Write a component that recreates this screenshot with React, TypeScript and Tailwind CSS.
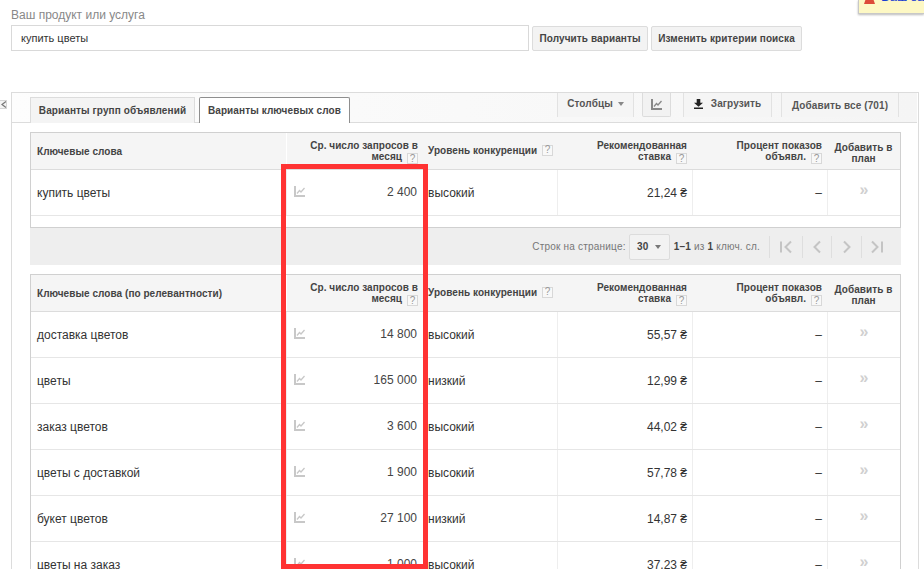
import React from 'react';

const gridCols = 'grid grid-cols-[255px_139px_132px_135px_135px_73px]';

const topRows = [{ kw: 'купить цветы', vol: '2 400', comp: 'высокий', bid: '21,24 ₴' }];

const rows = [
  { kw: 'доставка цветов', vol: '14 800', comp: 'высокий', bid: '55,57 ₴' },
  { kw: 'цветы', vol: '165 000', comp: 'низкий', bid: '12,99 ₴' },
  { kw: 'заказ цветов', vol: '3 600', comp: 'высокий', bid: '44,02 ₴' },
  { kw: 'цветы с доставкой', vol: '1 900', comp: 'высокий', bid: '57,78 ₴' },
  { kw: 'букет цветов', vol: '27 100', comp: 'низкий', bid: '14,87 ₴' },
  { kw: 'цветы на заказ', vol: '1 000', comp: 'высокий', bid: '37,23 ₴' },
];

const ChartIcon = ({ className = 'text-[#c8c8c8]' }: { className?: string }) => (
  <svg width="11" height="11" viewBox="0 0 11 11" className={className} fill="none" stroke="currentColor">
    <path d="M1 0v10H11" strokeWidth="2" />
    <path d="M3 7.5L5.5 4.5l1.5 1.5L10.5 2" strokeWidth="1.3" />
  </svg>
);

const Hint = () => (
  <span className="inline-flex w-[11px] h-[11px] -my-[2px] ml-[5px] items-center justify-center border border-[#d8d8d8] bg-[#f8f8f8] text-[10px] leading-none font-normal text-[#999] align-[-2px]">
    ?
  </span>
);

const TableHeader = ({ title }: { title: string }) => (
  <div className={`${gridCols} h-[37px] bg-[#f5f5f5] border-b border-[#dcdcdc] text-[10px] leading-[11px] font-bold text-[#444] tracking-[0.05px]`}>
    <div className="flex items-center pl-[6px]">{title}</div>
    <div className="border-l border-[#fff] flex flex-col justify-center items-end text-right pr-[7px]">
      <span>Ср. число запросов в</span>
      <span>месяц<Hint /></span>
    </div>
    <div className="flex items-center pl-[3px] pb-[2px] whitespace-nowrap">
      Уровень конкуренции<Hint />
    </div>
    <div className="flex flex-col justify-center items-end pr-[5px]">
      <span>Рекомендованная</span>
      <span>ставка<Hint /></span>
    </div>
    <div className="flex flex-col justify-center items-end pr-[5px]">
      <span>Процент показов</span>
      <span>объявл.<Hint /></span>
    </div>
    <div className="flex flex-col justify-center items-center text-center pt-[3px]">
      <span>Добавить в</span>
      <span>план</span>
    </div>
  </div>
);

const KeywordRow = ({ kw, vol, comp, bid }: { kw: string; vol: string; comp: string; bid: string }) => (
  <div className={`${gridCols} h-[46px] border-b border-[#e6e6e6] text-[12px] text-[#333]`}>
    <div className="flex items-center pl-[6px]">{kw}</div>
    <div className="border-l border-[#eee] flex items-center justify-between pl-[7px] pr-[8px] pb-[2px] text-[#444]">
      <ChartIcon />
      <span>{vol}</span>
    </div>
    <div className="flex items-center pl-[3px]">{comp}</div>
    <div className="border-l border-[#eee] flex items-center justify-end pr-[5px]">{bid}</div>
    <div className="border-l border-[#eee] flex items-center justify-end pr-[5px]">–</div>
    <div className="border-l border-[#eee] flex items-center justify-center pb-[5px] text-[16px] font-bold text-[#d0d0d0]">»</div>
  </div>
);

const PagerIcon = ({ d, width }: { d: string; width: string }) => (
  <div className={`${width} h-[22px] flex items-center justify-center border-l border-[#dedede]`}>
    <svg width="14" height="14" viewBox="0 0 14 14" fill="none" stroke="#c4c4c4" strokeWidth="2">
      <path d={d} />
    </svg>
  </div>
);

export default function App() {
  return (
    <div className="relative w-[924px] h-[569px] overflow-hidden bg-white font-['Liberation_Sans',Arial,sans-serif]">
      {/* Notification corner, scrolled mostly out of view */}
      <div className="absolute right-0 top-0 w-[66px] h-[14px] bg-[#fdf8c4] border-l border-b border-[#c8c8c8] shadow-[0_1px_2px_#bbb] flex items-start gap-[6px] pl-[5px] overflow-hidden">
        <svg width="11" height="10" viewBox="0 0 11 10" className="-mt-[6px] shrink-0">
          <path d="M3.5 0h4L11 10H0z" fill="#dd4b39" />
        </svg>
        <span className="-mt-[10px] text-[13px] leading-[14px] text-[#1a3fd0] whitespace-nowrap">Ваш зап</span>
      </div>

      {/* Search form */}
      <div className="h-[92px] pl-[11px] pt-[8px]">
        <div className="text-[12px] leading-[14px] text-[#888]">Ваш продукт или услуга</div>
        <div className="flex items-center mt-[3px]">
          <div className="w-[518px] h-[26px] border border-[#d9d9d9] flex items-center pl-[9px] text-[11px] text-[#333]">
            купить цветы
          </div>
          <button className="ml-[3px] w-[116px] h-[25px] rounded-[2px] border border-[#dcdcdc] bg-[#f3f3f3] text-[10px] font-bold text-[#444] tracking-[0.1px] whitespace-nowrap">
            Получить варианты
          </button>
          <button className="ml-[3px] w-[151px] h-[25px] rounded-[2px] border border-[#dcdcdc] bg-[#f3f3f3] text-[10px] font-bold text-[#444] tracking-[0.1px] whitespace-nowrap">
            Изменить критерии поиска
          </button>
        </div>
      </div>

      {/* Collapse handle */}
      <div className="absolute left-0 top-[100px] w-[7px] h-[9px] bg-[#f4f4f4] border border-l-0 border-[#d5d5d5] flex items-center justify-center">
        <svg width="5" height="7" viewBox="0 0 5 7" fill="none" stroke="#777" strokeWidth="1.2">
          <path d="M5 0.5L1 3.5l4 3" />
        </svg>
      </div>

      {/* Results panel */}
      <div className="ml-[11px] w-[908px] h-[477px] border-t border-l border-r border-[#dcdcdc] overflow-hidden">
        {/* Tabs and toolbar */}
        <div className="relative h-[30px] mr-[1px] bg-gradient-to-r from-[#fdfdfd] to-[#f5f5f5] border-b border-[#dcdcdc] flex items-start pl-[18px]">
          <div className="mt-[4px] w-[165px] h-[26px] border border-b-0 border-[#dcdcdc] bg-[#f4f4f4] flex items-center justify-center text-[10px] font-bold text-[#444] tracking-[0.1px] whitespace-nowrap">
            Варианты групп объявлений
          </div>
          <div className="ml-[4px] mt-[4px] w-[151px] h-[26px] border border-b-0 border-[#8e8e8e] rounded-t-[2px] bg-white flex items-center justify-center text-[10px] font-bold text-[#444] tracking-[0.1px] whitespace-nowrap relative z-10">
            Варианты ключевых слов
          </div>
          <div className="ml-auto mr-[18px] flex items-start text-[10px] font-bold text-[#555] tracking-[0.1px]">
            <div className="w-[77px] h-[24px] pb-[3px] bg-[#f5f5f5] border-x border-[#e2e2e2] flex items-center justify-center gap-[5px]">
              Столбцы
              <span className="w-0 h-0 border-x-[3.5px] border-x-transparent border-t-[4px] border-t-[#888] mt-[1px]" />
            </div>
            <div className="ml-[8px] w-[29px] h-[24px] bg-[#f2f2f2] border border-t-0 border-[#dcdcdc] rounded-b-[2px] flex items-center justify-center">
              <ChartIcon className="text-[#888]" />
            </div>
            <div className="ml-[12px] w-[89px] h-[24px] pb-[3px] bg-[#f5f5f5] border-x border-[#e2e2e2] flex items-center justify-center gap-[8px]">
              <svg width="9" height="10" viewBox="0 0 10 11" fill="#222">
                <path d="M3 0h4v4h3L5 8.5 0 4h3zM0 9.5h10V11H0z" />
              </svg>
              Загрузить
            </div>
            <div className="ml-[9px] w-[118px] h-[24px] bg-[#f5f5f5] border-x border-[#e2e2e2] flex items-center justify-center">
              Добавить все (701)
            </div>
          </div>
        </div>

        <div className="pl-[18px] pt-[9px]">
          {/* Seed keyword table */}
          <div className="w-[871px] border border-[#d0d0d0] border-b-0">
            <TableHeader title="Ключевые слова" />
            {topRows.map((r) => (
              <KeywordRow key={r.kw} {...r} />
            ))}
            <div className="h-[12px] border-b border-[#d0d0d0]" />
          </div>

          {/* Pagination band */}
          <div className="w-[871px] h-[37px] bg-[#eeeeee] flex items-center justify-end pr-[10px] text-[10px] text-[#777] tracking-[0.2px]">
            <span>Строк на странице:</span>
            <div className="ml-[3px] w-[41px] h-[26px] bg-[#f2f2f2] border border-[#dcdcdc] rounded-[2px] flex items-center justify-center gap-[7px] font-bold text-[#444]">
              30
              <span className="w-0 h-0 border-x-[3.5px] border-x-transparent border-t-[4px] border-t-[#777]" />
            </div>
            <span className="ml-[4px] mr-[9px] whitespace-nowrap">
              <b className="text-[#444]">1–1</b> из <b className="text-[#444]">1</b> ключ. сл.
            </span>
            <PagerIcon width="w-[33px]" d="M2 1.5v11M12 1.5L6.5 7l5.5 5.5" />
            <PagerIcon width="w-[29px]" d="M10 1.5L4.5 7l5.5 5.5" />
            <PagerIcon width="w-[30px]" d="M4 1.5L9.5 7 4 12.5" />
            <PagerIcon width="w-[30px]" d="M2 1.5L7.5 7 2 12.5M12 1.5v11" />
          </div>

          {/* Keyword ideas table */}
          <div className="mt-[9px] w-[871px] border border-[#d0d0d0] border-b-0">
            <TableHeader title="Ключевые слова (по релевантности)" />
            {rows.map((r) => (
              <KeywordRow key={r.kw} {...r} />
            ))}
          </div>
        </div>
      </div>

      {/* Red highlight drawn over the volume column */}
      <div className="absolute left-[281px] top-[164px] w-[147px] h-[405px] border-[5px] border-[#ff3333]" />
    </div>
  );
}
